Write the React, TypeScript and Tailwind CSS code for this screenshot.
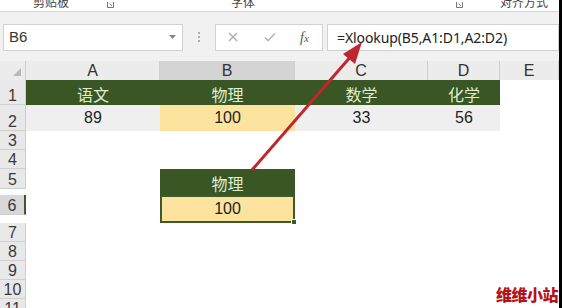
import type { ReactNode } from "react";

const cjk = "font-['Noto_Sans_CJK_SC',sans-serif]";
const num = "font-['Liberation_Sans',sans-serif]";

const rows: { n: number; h: string; sel?: boolean }[] = [
  { n: 3, h: "h-[19px]" },
  { n: 4, h: "h-[19px]" },
  { n: 5, h: "h-[20px]" },
  { n: 6, h: "h-[20px]", sel: true },
  { n: 7, h: "h-[19px]" },
  { n: 8, h: "h-[19px]" },
  { n: 9, h: "h-[19px]" },
  { n: 10, h: "h-[19px]" },
  { n: 11, h: "h-[19px]" },
  { n: 12, h: "h-[19px]" },
];

function RowHead({ n, sel }: { n: number; sel?: boolean }) {
  return (
    <div
      className={`flex items-end justify-center border-b border-r border-[#cfcfcf] text-[16px] leading-none text-[#3a3a3a] ${num} ${
        sel ? "border-r-2 border-r-[#3d5a2a] bg-[#d8d8d8]" : "bg-[#e8e8e8]"
      }`}
    >
      {n}
    </div>
  );
}

function ColHead({ label, sel }: { label: string; sel?: boolean }) {
  return (
    <div
      className={`flex items-end justify-center border-r border-[#cfcfcf] pb-[1px] text-[16px] leading-none text-[#333] ${num} ${
        sel ? "bg-[#d4d4d4]" : "bg-[#ececec]"
      }`}
    >
      {label}
    </div>
  );
}

function Cell({ className = "", children }: { className?: string; children?: ReactNode }) {
  return <div className={`flex items-center justify-center ${className}`}>{children}</div>;
}

function Launcher({ className }: { className: string }) {
  return (
    <svg width="7" height="6" viewBox="0 0 7 6" className={className}>
      <path d="M0.5 0 V5.5 H6.5 V0" fill="none" stroke="#777" strokeWidth="1" />
      <path d="M2.5 1.5 L5 4" stroke="#777" strokeWidth="1" />
    </svg>
  );
}

export default function App() {
  return (
    <div className="relative flex h-[308px] w-[564px] overflow-hidden bg-white">
      <div className="flex w-[559px] shrink-0 flex-col">
        {/* ribbon group labels, cut off at the top */}
        <div className={`relative h-[12px] shrink-0 overflow-hidden border-b border-[#d6d6d6] bg-white text-[12px] leading-[12px] text-[#444] ${cjk}`}>
          <span className="absolute left-[33px] top-[-4px]">剪贴板</span>
          <Launcher className="absolute left-[107px] top-[2px]" />
          <span className="absolute left-[231px] top-[-4px]">字体</span>
          <Launcher className="absolute left-[456px] top-[2px]" />
          <span className="absolute left-[500px] top-[-4px]">对齐方式</span>
        </div>

        {/* formula bar */}
        <div className="flex h-[49px] shrink-0 items-center bg-[#f1f1f1] pl-[3px] pt-[1px]">
          <div className="flex h-[27px] w-[180px] items-center justify-between border border-[#d2d2d2] bg-white pl-[5px] pr-[6px]">
            <span className={`text-[15px] text-[#333] ${num}`}>B6</span>
            <svg width="7" height="4" viewBox="0 0 7 4">
              <path d="M0 0 H7 L3.5 4 Z" fill="#888" />
            </svg>
          </div>
          <div className="flex w-[32px] flex-col items-center gap-[2px]">
            <span className="h-[2px] w-[2px] bg-[#b0b0b0]" />
            <span className="h-[2px] w-[2px] bg-[#b0b0b0]" />
            <span className="h-[2px] w-[2px] bg-[#b0b0b0]" />
          </div>
          <div className="flex h-[27px] w-[108px] items-center border border-[#d2d2d2] bg-white">
            <svg width="10" height="10" viewBox="0 0 10 10" className="ml-[12px]">
              <path d="M1 1 L9 9 M9 1 L1 9" stroke="#a8a8a8" strokeWidth="1.2" />
            </svg>
            <svg width="12" height="10" viewBox="0 0 12 10" className="ml-[26px]">
              <path d="M1 5.5 L4.2 8.6 L11 1.4" fill="none" stroke="#a8a8a8" strokeWidth="1.3" />
            </svg>
            <span className="ml-[24px] font-['Liberation_Serif',serif] text-[14px] italic text-[#555]">
              f<span className="text-[11px]">x</span>
            </span>
          </div>
          <div className="ml-[4px] flex h-[27px] flex-1 items-center border border-[#d2d2d2] bg-white pl-[9px]">
            <span className="font-['Noto_Sans',sans-serif] text-[14px] tracking-[-0.1px] text-[#222]">=Xlookup(B5,A1:D1,A2:D2)</span>
          </div>
        </div>

        {/* sheet */}
        <div className="grid shrink-0 grid-cols-[26px_134px_135px_133px_72px_59px] grid-rows-[19px_25px_26px]">
          <div className="relative border-r border-[#cfcfcf] bg-[#ececec]">
            <svg width="8" height="8" viewBox="0 0 8 8" className="absolute bottom-[4px] right-[4px]">
              <path d="M8 0 V8 H0 Z" fill="#b9b9b9" />
            </svg>
          </div>
          <ColHead label="A" />
          <ColHead label="B" sel />
          <ColHead label="C" />
          <ColHead label="D" />
          <ColHead label="E" />

          <RowHead n={1} />
          {["语文", "物理", "数学", "化学"].map((t) => (
            <Cell key={t} className={`bg-[#3a5624] pt-[2px] text-[16px] text-[#dfeed3] ${cjk}`}>
              {t}
            </Cell>
          ))}
          <div />

          <RowHead n={2} />
          <Cell className={`bg-[#efefef] text-[16px] text-[#222] ${num}`}>89</Cell>
          <Cell className={`bg-[#fde49e] text-[16px] text-[#222] ${num}`}>100</Cell>
          <Cell className={`bg-[#efefef] text-[16px] text-[#222] ${num}`}>33</Cell>
          <Cell className={`bg-[#efefef] text-[16px] text-[#222] ${num}`}>56</Cell>
          <div />
        </div>
        <div className="grid shrink-0 grid-cols-[26px_134px_135px_133px_72px_59px]">
          {rows.map((r) => (
            <div key={r.n} className="contents">
              <div className={`${r.h} grid`}>
                <RowHead n={r.n} sel={r.sel} />
              </div>
              <div />
              {r.n === 5 ? (
                <Cell className={`bg-[#3a5624] pt-[2px] text-[16px] text-[#dfeed3] ${cjk}`}>物理</Cell>
              ) : r.n === 6 ? (
                <div className="relative flex items-center justify-center border-2 border-[#3d5a2a] bg-[#fde49e]">
                  <span className={`text-[16px] text-[#222] ${num}`}>100</span>
                  <span className="absolute bottom-[-4px] right-[-4px] h-[6px] w-[6px] border border-white bg-[#3d5a2a]" />
                </div>
              ) : (
                <div />
              )}
              <div />
              <div />
              <div />
            </div>
          ))}
        </div>
      </div>
      <div className="w-[3px] shrink-0 bg-black" />

      {/* red arrow pointing at the formula */}
      <svg width="564" height="308" className="pointer-events-none absolute left-0 top-0">
        <line x1="252" y1="170" x2="352" y2="55" stroke="#c0272d" strokeWidth="3" />
        <polygon points="362,42 343,54 355,64" fill="#c0272d" />
      </svg>

      <span className={`absolute bottom-[2px] right-[6px] text-[16px] font-black tracking-[-0.5px] text-[#b3121c] ${cjk}`}>
        维维小站
      </span>
    </div>
  );
}
